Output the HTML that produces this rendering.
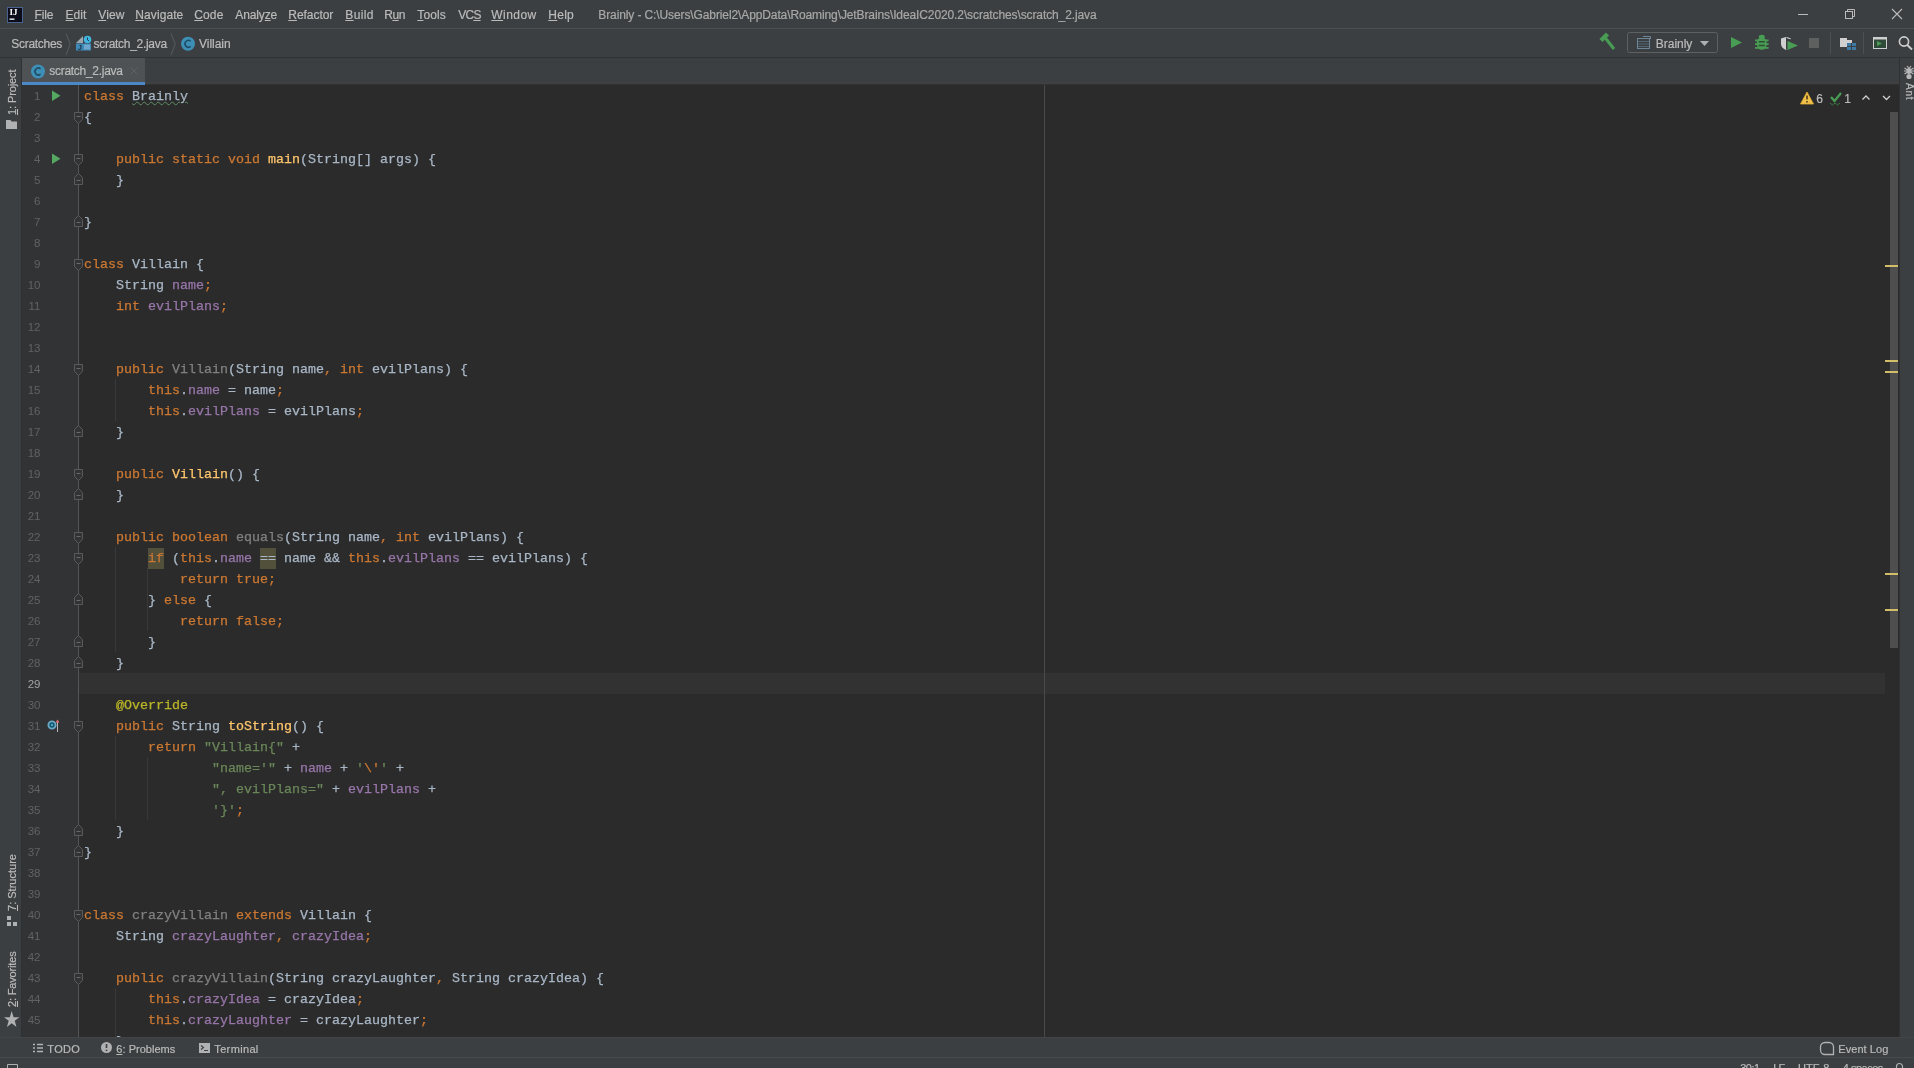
<!DOCTYPE html><html><head><meta charset="utf-8"><title>IntelliJ</title><style>
*{margin:0;padding:0;box-sizing:border-box}
html,body{width:1914px;height:1068px;overflow:hidden;background:#2B2B2B;font-family:"Liberation Sans",sans-serif;font-size:12px;color:#BBBBBB}
.a{position:absolute}
svg.a{overflow:visible}
.ui{position:absolute;white-space:nowrap;font-size:12px;line-height:14px;color:#BBBBBB;-webkit-text-stroke:0.2px currentColor}
.u{text-decoration:underline;text-underline-offset:1px;text-decoration-thickness:1px}
.cl{position:absolute;left:84px;height:21px;white-space:pre;font-family:"Liberation Mono",monospace;font-size:13.333px;line-height:21px;color:#A9B7C6;-webkit-text-stroke:0.25px currentColor}
.ln{position:absolute;left:0;width:40.5px;text-align:right;font-family:"Liberation Sans",sans-serif;font-size:11.5px;line-height:21px;color:#606366;white-space:pre}
.warn{background:#52503A;display:inline-block;height:21px;vertical-align:top}
.typo{text-decoration:underline wavy #5F8F68;text-decoration-thickness:1px;text-underline-offset:1px}
.vt{position:absolute;white-space:nowrap;font-size:11px;line-height:13px;color:#BBBBBB;transform-origin:0 0;-webkit-text-stroke:0.2px currentColor}
.ig{position:absolute;width:1px;background:#393939}
</style></head><body><div class="a" style="left:0;top:0;width:1914px;height:1068px;will-change:transform">
<div class="a" style="left:0;top:0;width:1914px;height:28px;background:#3C3F41"></div>
<div class="a" style="left:0;top:28px;width:1914px;height:1px;background:#4B4F52"></div>
<svg class="a" style="left:0;top:0" width="30" height="28"><rect x="7.5" y="7.5" width="15" height="15" fill="#0B0D1A" stroke="#48648E" stroke-width="1"/><text x="9.6" y="15.2" font-family="Liberation Serif" font-weight="bold" font-size="9" fill="#FFFFFF">IJ</text><rect x="9.5" y="18.5" width="5" height="1.3" fill="#FFFFFF"/></svg>
<div class="ui" style="left:34.6px;top:8px;font-size:12px;line-height:14px;letter-spacing:-0.21px"><span class="u">F</span>ile</div>
<div class="ui" style="left:65.6px;top:8px;font-size:12px;line-height:14px;letter-spacing:0.01px"><span class="u">E</span>dit</div>
<div class="ui" style="left:98.3px;top:8px;font-size:12px;line-height:14px;letter-spacing:0.07px"><span class="u">V</span>iew</div>
<div class="ui" style="left:135.3px;top:8px;font-size:12px;line-height:14px;letter-spacing:0.09px"><span class="u">N</span>avigate</div>
<div class="ui" style="left:194.3px;top:8px;font-size:12px;line-height:14px;letter-spacing:0.10px"><span class="u">C</span>ode</div>
<div class="ui" style="left:235.3px;top:8px;font-size:12px;line-height:14px;letter-spacing:-0.12px">Analy<span class="u">z</span>e</div>
<div class="ui" style="left:288.3px;top:8px;font-size:12px;line-height:14px;letter-spacing:-0.05px"><span class="u">R</span>efactor</div>
<div class="ui" style="left:345.3px;top:8px;font-size:12px;line-height:14px;letter-spacing:0.33px"><span class="u">B</span>uild</div>
<div class="ui" style="left:384.3px;top:8px;font-size:12px;line-height:14px;letter-spacing:-0.51px">R<span class="u">u</span>n</div>
<div class="ui" style="left:417.3px;top:8px;font-size:12px;line-height:14px;letter-spacing:0.12px"><span class="u">T</span>ools</div>
<div class="ui" style="left:458.3px;top:8px;font-size:12px;line-height:14px;letter-spacing:-0.80px">VC<span class="u">S</span></div>
<div class="ui" style="left:491.3px;top:8px;font-size:12px;line-height:14px;letter-spacing:0.46px"><span class="u">W</span>indow</div>
<div class="ui" style="left:548.3px;top:8px;font-size:12px;line-height:14px;letter-spacing:0.27px"><span class="u">H</span>elp</div>
<div class="ui" style="left:598.3px;top:8px;font-size:12px;line-height:14px;letter-spacing:-0.11px;color:#A8A8A8">Brainly - C:\Users\Gabriel2\AppData\Roaming\JetBrains\IdeaIC2020.2\scratches\scratch_2.java</div>
<svg class="a" style="left:1780px;top:0" width="134" height="28"><path d="M18 14.5H28" stroke="#BBBBBB" stroke-width="1"/><rect x="65.5" y="11.5" width="7" height="7" fill="none" stroke="#BBBBBB"/><path d="M67.5 11.5V9.5H74.5V16.5H72.5" fill="none" stroke="#BBBBBB"/><path d="M112 9L122 19M122 9L112 19" stroke="#BBBBBB" stroke-width="1.1"/></svg>
<div class="a" style="left:0;top:29px;width:1914px;height:28px;background:#3C3F41"></div>
<div class="a" style="left:0;top:57px;width:1914px;height:1px;background:#2F3133"></div>
<div class="ui" style="left:11.3px;top:37px;font-size:12px;line-height:14px;letter-spacing:-0.29px">Scratches</div>
<svg class="a" style="left:0;top:29px" width="240" height="28"><path d="M66 4.5L70.2 15L66 26" stroke="#55585A" stroke-width="1.1" fill="none"/><path d="M171 4.5L175.2 15L171 26" stroke="#55585A" stroke-width="1.1" fill="none"/><path d="M76 14H83V7Z" fill="#9AA7B0"/><circle cx="87.5" cy="10.5" r="3.8" fill="#40B6E0"/><path d="M87.5 8.5V10.8L89 12" stroke="#1D3A4A" stroke-width="1" fill="none"/><rect x="76" y="14.5" width="15" height="7" fill="#3F8AB8"/><rect x="84" y="15.5" width="6" height="5" fill="#6FA8CC"/><text x="78" y="21" font-family="Liberation Sans" font-weight="bold" font-size="7" fill="#1B2B3B">J</text><circle cx="188" cy="14.8" r="7" fill="#3E8FB6"/><path d="M190.6 12.2A3.4 3.4 0 1 0 190.6 17.4" stroke="#1E4E67" stroke-width="1.6" fill="none"/></svg>
<div class="ui" style="left:93.6px;top:37px;font-size:12px;line-height:14px;letter-spacing:-0.30px">scratch_2.java</div>
<div class="ui" style="left:199.0px;top:37px;font-size:12px;line-height:14px;letter-spacing:-0.03px">Villain</div>
<svg class="a" style="left:1590px;top:29px" width="324" height="28"><path d="M11 11.5L17.5 5" stroke="#499C54" stroke-width="4.5"/><path d="M15 8.5L24 20" stroke="#499C54" stroke-width="3"/><rect x="37.5" y="3.5" width="90" height="20" rx="2" fill="none" stroke="#5E6162"/><rect x="47.5" y="9.5" width="12" height="10" fill="none" stroke="#6E8595"/><path d="M48 12.5H59M48 15H59M48 17.5H59" stroke="#56707F" stroke-width="0.8"/><path d="M53 7.5H60.5V10" stroke="#6E8595" fill="none"/><path d="M110 12H119L114.5 17Z" fill="#AFB1B3"/><path d="M141 8L152 13.5L141 19Z" fill="#499C54"/><g fill="#499C54"><ellipse cx="171.8" cy="7.8" rx="3" ry="2"/><ellipse cx="171.8" cy="14.5" rx="5" ry="6.3"/><rect x="165" y="10.5" width="13.6" height="1.8"/><rect x="165" y="14.2" width="13.6" height="1.8"/><rect x="165" y="18" width="13.6" height="1.8"/></g><path d="M168.8 12.8H174.8M168.8 16.5H174.8" stroke="#2C4F31" stroke-width="1.4"/><path d="M191 9.5L196 8L201 9.5V15C201 18 198.5 20 196 21C193.5 20 191 18 191 15Z" fill="#CFCFCF"/><path d="M196 8V21C198.5 20 201 18 201 15V9.5Z" fill="#3C3F41"/><path d="M196.5 8.5L200.5 9.8" stroke="#CFCFCF"/><path d="M197.5 12L208 16.5L197.5 21Z" fill="#499C54"/><rect x="219" y="9" width="10" height="10" fill="#5E6060"/><path d="M240.5 3V25M273.5 3V25" stroke="#4D5052"/><rect x="250" y="9" width="7" height="9" fill="#CFCFCF"/><rect x="256" y="11" width="6" height="3" fill="#CFCFCF"/><rect x="257" y="14" width="9" height="7" fill="#3D7BA6"/><path d="M261.5 14V21M257 17.5H266" stroke="#3C3F41" stroke-width="1"/><rect x="283.5" y="8.5" width="13" height="11" fill="#2F4A38" stroke="#CFCFCF" stroke-width="1"/><rect x="283.5" y="8.5" width="13" height="2" fill="#CFCFCF"/><path d="M287 12L292 14.5L287 17Z" fill="#499C54"/><circle cx="314" cy="12.5" r="4.6" fill="none" stroke="#CFCFCF" stroke-width="1.6"/><path d="M317.3 16L322 20.5" stroke="#CFCFCF" stroke-width="1.8"/></svg>
<div class="ui" style="left:1655.8px;top:37px;font-size:12px;line-height:14px;letter-spacing:-0.03px">Brainly</div>
<div class="a" style="left:0;top:58px;width:21px;height:979px;background:#3C3F41"></div>
<div class="a" style="left:21px;top:58px;width:1px;height:979px;background:#2F3133"></div>
<div class="vt" style="left:6px;top:115.0px;letter-spacing:-0.11px;color:#BBBBBB;transform:rotate(-90deg)"><span class="u">1</span>: Project</div>
<div class="vt" style="left:6px;top:910.7px;letter-spacing:0.01px;color:#BBBBBB;transform:rotate(-90deg)"><span class="u">7</span>: Structure</div>
<div class="vt" style="left:6px;top:1007.4px;letter-spacing:-0.16px;color:#BBBBBB;transform:rotate(-90deg)"><span class="u">2</span>: Favorites</div>
<svg class="a" style="left:0;top:0" width="21" height="1068"><path d="M6 120H10.5L11.5 121.5H17V129H6Z" fill="#AFB1B3"/><rect x="7" y="916" width="4" height="4" fill="#AFB1B3"/><rect x="7" y="922" width="4" height="4" fill="#AFB1B3"/><rect x="13" y="922" width="4" height="4" fill="#AFB1B3"/><path d="M11.7 1011L13.6 1017.2H19.4L14.7 1020.8L16.5 1027L11.7 1023.2L6.9 1027L8.7 1020.8L4 1017.2H9.8Z" fill="#AFB1B3"/></svg>
<div class="a" style="left:22px;top:58px;width:1877px;height:26px;background:#3C3F41"></div>
<div class="a" style="left:22px;top:84px;width:1877px;height:1px;background:#323232"></div>
<div class="a" style="left:145px;top:62px;width:1754px;height:1px;background:#393B3D"></div>
<div class="a" style="left:145px;top:82px;width:1754px;height:2px;background:#3F4042"></div>
<div class="a" style="left:22px;top:58px;width:123px;height:24px;background:#4E5254"></div>
<div class="a" style="left:22px;top:82px;width:123px;height:3px;background:#4A88C7"></div>
<svg class="a" style="left:22px;top:58px" width="123" height="26"><circle cx="16" cy="13.5" r="7" fill="#3E8FB6"/><path d="M18.6 10.9A3.4 3.4 0 1 0 18.6 16.1" stroke="#1E4E67" stroke-width="1.6" fill="none"/><path d="M108.5 9.5L115.5 16.5M115.5 9.5L108.5 16.5" stroke="#5F6265" stroke-width="1"/></svg>
<div class="ui" style="left:49.3px;top:64px;font-size:12px;line-height:14px;letter-spacing:-0.29px">scratch_2.java</div>
<div class="a" style="left:22px;top:85px;width:56px;height:952px;background:#313335"></div>
<div class="a" style="left:78px;top:85px;width:1821px;height:952px;background:#2B2B2B"></div>
<div class="a" style="left:79px;top:673px;width:1806px;height:21px;background:#323232"></div>
<div class="a" style="left:1044px;top:85px;width:1px;height:952px;background:#4A4A4A"></div>
<div class="a" style="left:78px;top:85px;width:1px;height:952px;background:#555555"></div>
<div class="ig" style="left:115px;top:379px;height:42px"></div>
<div class="ig" style="left:115px;top:547px;height:105px"></div>
<div class="ig" style="left:147px;top:568px;height:63px"></div>
<div class="ig" style="left:115px;top:736px;height:84px"></div>
<div class="ig" style="left:147px;top:757px;height:63px"></div>
<div class="ig" style="left:115px;top:988px;height:63px"></div>
<div class="a" style="left:0;top:85px;width:1899px;height:952px;overflow:hidden"><div class="a" style="left:0;top:-85px;width:1899px;height:1068px">
<div class="ln" style="top:86px;color:#606366">1</div>
<div class="cl" style="top:86px"><span style="color:#CC7832">class </span><span style="color:#A9B7C6" class="typo">Brainly</span></div>
<div class="ln" style="top:107px;color:#606366">2</div>
<div class="cl" style="top:107px"><span style="color:#A9B7C6">{</span></div>
<div class="ln" style="top:128px;color:#606366">3</div>
<div class="ln" style="top:149px;color:#606366">4</div>
<div class="cl" style="top:149px"><span style="color:#A9B7C6">    </span><span style="color:#CC7832">public static void </span><span style="color:#FFC66D">main</span><span style="color:#A9B7C6">(String[] args) {</span></div>
<div class="ln" style="top:170px;color:#606366">5</div>
<div class="cl" style="top:170px"><span style="color:#A9B7C6">    }</span></div>
<div class="ln" style="top:191px;color:#606366">6</div>
<div class="ln" style="top:212px;color:#606366">7</div>
<div class="cl" style="top:212px"><span style="color:#A9B7C6">}</span></div>
<div class="ln" style="top:233px;color:#606366">8</div>
<div class="ln" style="top:254px;color:#606366">9</div>
<div class="cl" style="top:254px"><span style="color:#CC7832">class </span><span style="color:#A9B7C6">Villain {</span></div>
<div class="ln" style="top:275px;color:#606366">10</div>
<div class="cl" style="top:275px"><span style="color:#A9B7C6">    String </span><span style="color:#9876AA">name</span><span style="color:#CC7832">;</span></div>
<div class="ln" style="top:296px;color:#606366">11</div>
<div class="cl" style="top:296px"><span style="color:#A9B7C6">    </span><span style="color:#CC7832">int </span><span style="color:#9876AA">evilPlans</span><span style="color:#CC7832">;</span></div>
<div class="ln" style="top:317px;color:#606366">12</div>
<div class="ln" style="top:338px;color:#606366">13</div>
<div class="ln" style="top:359px;color:#606366">14</div>
<div class="cl" style="top:359px"><span style="color:#A9B7C6">    </span><span style="color:#CC7832">public </span><span style="color:#808080">Villain</span><span style="color:#A9B7C6">(String name</span><span style="color:#CC7832">, </span><span style="color:#CC7832">int </span><span style="color:#A9B7C6">evilPlans) {</span></div>
<div class="ln" style="top:380px;color:#606366">15</div>
<div class="cl" style="top:380px"><span style="color:#A9B7C6">        </span><span style="color:#CC7832">this</span><span style="color:#A9B7C6">.</span><span style="color:#9876AA">name</span><span style="color:#A9B7C6"> = name</span><span style="color:#CC7832">;</span></div>
<div class="ln" style="top:401px;color:#606366">16</div>
<div class="cl" style="top:401px"><span style="color:#A9B7C6">        </span><span style="color:#CC7832">this</span><span style="color:#A9B7C6">.</span><span style="color:#9876AA">evilPlans</span><span style="color:#A9B7C6"> = evilPlans</span><span style="color:#CC7832">;</span></div>
<div class="ln" style="top:422px;color:#606366">17</div>
<div class="cl" style="top:422px"><span style="color:#A9B7C6">    }</span></div>
<div class="ln" style="top:443px;color:#606366">18</div>
<div class="ln" style="top:464px;color:#606366">19</div>
<div class="cl" style="top:464px"><span style="color:#A9B7C6">    </span><span style="color:#CC7832">public </span><span style="color:#FFC66D">Villain</span><span style="color:#A9B7C6">() {</span></div>
<div class="ln" style="top:485px;color:#606366">20</div>
<div class="cl" style="top:485px"><span style="color:#A9B7C6">    }</span></div>
<div class="ln" style="top:506px;color:#606366">21</div>
<div class="ln" style="top:527px;color:#606366">22</div>
<div class="cl" style="top:527px"><span style="color:#A9B7C6">    </span><span style="color:#CC7832">public boolean </span><span style="color:#808080">equals</span><span style="color:#A9B7C6">(String name</span><span style="color:#CC7832">, </span><span style="color:#CC7832">int </span><span style="color:#A9B7C6">evilPlans) {</span></div>
<div class="ln" style="top:548px;color:#606366">23</div>
<div class="cl" style="top:548px"><span style="color:#A9B7C6">        </span><span style="color:#CC7832" class="warn">if</span><span style="color:#A9B7C6"> (</span><span style="color:#CC7832">this</span><span style="color:#A9B7C6">.</span><span style="color:#9876AA">name</span><span style="color:#A9B7C6"> </span><span style="color:#A9B7C6" class="warn">==</span><span style="color:#A9B7C6"> name &amp;&amp; </span><span style="color:#CC7832">this</span><span style="color:#A9B7C6">.</span><span style="color:#9876AA">evilPlans</span><span style="color:#A9B7C6"> == evilPlans) {</span></div>
<div class="ln" style="top:569px;color:#606366">24</div>
<div class="cl" style="top:569px"><span style="color:#A9B7C6">            </span><span style="color:#CC7832">return true;</span></div>
<div class="ln" style="top:590px;color:#606366">25</div>
<div class="cl" style="top:590px"><span style="color:#A9B7C6">        } </span><span style="color:#CC7832">else </span><span style="color:#A9B7C6">{</span></div>
<div class="ln" style="top:611px;color:#606366">26</div>
<div class="cl" style="top:611px"><span style="color:#A9B7C6">            </span><span style="color:#CC7832">return false;</span></div>
<div class="ln" style="top:632px;color:#606366">27</div>
<div class="cl" style="top:632px"><span style="color:#A9B7C6">        }</span></div>
<div class="ln" style="top:653px;color:#606366">28</div>
<div class="cl" style="top:653px"><span style="color:#A9B7C6">    }</span></div>
<div class="ln" style="top:674px;color:#A4A3A3">29</div>
<div class="ln" style="top:695px;color:#606366">30</div>
<div class="cl" style="top:695px"><span style="color:#A9B7C6">    </span><span style="color:#BBB529">@Override</span></div>
<div class="ln" style="top:716px;color:#606366">31</div>
<div class="cl" style="top:716px"><span style="color:#A9B7C6">    </span><span style="color:#CC7832">public </span><span style="color:#A9B7C6">String </span><span style="color:#FFC66D">toString</span><span style="color:#A9B7C6">() {</span></div>
<div class="ln" style="top:737px;color:#606366">32</div>
<div class="cl" style="top:737px"><span style="color:#A9B7C6">        </span><span style="color:#CC7832">return </span><span style="color:#6A8759">&quot;Villain{&quot;</span><span style="color:#A9B7C6"> +</span></div>
<div class="ln" style="top:758px;color:#606366">33</div>
<div class="cl" style="top:758px"><span style="color:#A9B7C6">                </span><span style="color:#6A8759">&quot;name=&#x27;&quot;</span><span style="color:#A9B7C6"> + </span><span style="color:#9876AA">name</span><span style="color:#A9B7C6"> + </span><span style="color:#6A8759">&#x27;</span><span style="color:#CC7832">\&#x27;</span><span style="color:#6A8759">&#x27;</span><span style="color:#A9B7C6"> +</span></div>
<div class="ln" style="top:779px;color:#606366">34</div>
<div class="cl" style="top:779px"><span style="color:#A9B7C6">                </span><span style="color:#6A8759">&quot;, evilPlans=&quot;</span><span style="color:#A9B7C6"> + </span><span style="color:#9876AA">evilPlans</span><span style="color:#A9B7C6"> +</span></div>
<div class="ln" style="top:800px;color:#606366">35</div>
<div class="cl" style="top:800px"><span style="color:#A9B7C6">                </span><span style="color:#6A8759">&#x27;}&#x27;</span><span style="color:#CC7832">;</span></div>
<div class="ln" style="top:821px;color:#606366">36</div>
<div class="cl" style="top:821px"><span style="color:#A9B7C6">    }</span></div>
<div class="ln" style="top:842px;color:#606366">37</div>
<div class="cl" style="top:842px"><span style="color:#A9B7C6">}</span></div>
<div class="ln" style="top:863px;color:#606366">38</div>
<div class="ln" style="top:884px;color:#606366">39</div>
<div class="ln" style="top:905px;color:#606366">40</div>
<div class="cl" style="top:905px"><span style="color:#CC7832">class </span><span style="color:#808080">crazyVillain </span><span style="color:#CC7832">extends </span><span style="color:#A9B7C6">Villain {</span></div>
<div class="ln" style="top:926px;color:#606366">41</div>
<div class="cl" style="top:926px"><span style="color:#A9B7C6">    String </span><span style="color:#9876AA">crazyLaughter</span><span style="color:#CC7832">, </span><span style="color:#9876AA">crazyIdea</span><span style="color:#CC7832">;</span></div>
<div class="ln" style="top:947px;color:#606366">42</div>
<div class="ln" style="top:968px;color:#606366">43</div>
<div class="cl" style="top:968px"><span style="color:#A9B7C6">    </span><span style="color:#CC7832">public </span><span style="color:#808080">crazyVillain</span><span style="color:#A9B7C6">(String crazyLaughter</span><span style="color:#CC7832">, </span><span style="color:#A9B7C6">String crazyIdea) {</span></div>
<div class="ln" style="top:989px;color:#606366">44</div>
<div class="cl" style="top:989px"><span style="color:#A9B7C6">        </span><span style="color:#CC7832">this</span><span style="color:#A9B7C6">.</span><span style="color:#9876AA">crazyIdea</span><span style="color:#A9B7C6"> = crazyIdea</span><span style="color:#CC7832">;</span></div>
<div class="ln" style="top:1010px;color:#606366">45</div>
<div class="cl" style="top:1010px"><span style="color:#A9B7C6">        </span><span style="color:#CC7832">this</span><span style="color:#A9B7C6">.</span><span style="color:#9876AA">crazyLaughter</span><span style="color:#A9B7C6"> = crazyLaughter</span><span style="color:#CC7832">;</span></div>
<div class="cl" style="top:1031px"><span style="color:#A9B7C6">    }</span></div>
</div></div>
<svg class="a" style="left:0;top:0" width="90" height="1068"><path d="M52 90.5L60.5 95.8L52 101Z" fill="#55A862"/><path d="M52 153.5L60.5 158.8L52 164Z" fill="#55A862"/><path d="M74.5 112.5H82.5V119.5L78.5 123.5L74.5 119.5Z" fill="#313335" stroke="#5A5A5A"/><path d="M76.5 116.5H80.5" stroke="#6A6A6A"/><path d="M74.5 154.5H82.5V161.5L78.5 165.5L74.5 161.5Z" fill="#313335" stroke="#5A5A5A"/><path d="M76.5 158.5H80.5" stroke="#6A6A6A"/><path d="M74.5 259.5H82.5V266.5L78.5 270.5L74.5 266.5Z" fill="#313335" stroke="#5A5A5A"/><path d="M76.5 263.5H80.5" stroke="#6A6A6A"/><path d="M74.5 364.5H82.5V371.5L78.5 375.5L74.5 371.5Z" fill="#313335" stroke="#5A5A5A"/><path d="M76.5 368.5H80.5" stroke="#6A6A6A"/><path d="M74.5 469.5H82.5V476.5L78.5 480.5L74.5 476.5Z" fill="#313335" stroke="#5A5A5A"/><path d="M76.5 473.5H80.5" stroke="#6A6A6A"/><path d="M74.5 532.5H82.5V539.5L78.5 543.5L74.5 539.5Z" fill="#313335" stroke="#5A5A5A"/><path d="M76.5 536.5H80.5" stroke="#6A6A6A"/><path d="M74.5 553.5H82.5V560.5L78.5 564.5L74.5 560.5Z" fill="#313335" stroke="#5A5A5A"/><path d="M76.5 557.5H80.5" stroke="#6A6A6A"/><path d="M74.5 721.5H82.5V728.5L78.5 732.5L74.5 728.5Z" fill="#313335" stroke="#5A5A5A"/><path d="M76.5 725.5H80.5" stroke="#6A6A6A"/><path d="M74.5 910.5H82.5V917.5L78.5 921.5L74.5 917.5Z" fill="#313335" stroke="#5A5A5A"/><path d="M76.5 914.5H80.5" stroke="#6A6A6A"/><path d="M74.5 973.5H82.5V980.5L78.5 984.5L74.5 980.5Z" fill="#313335" stroke="#5A5A5A"/><path d="M76.5 977.5H80.5" stroke="#6A6A6A"/><path d="M74.5 184.5H82.5V177.5L78.5 173.5L74.5 177.5Z" fill="#313335" stroke="#5A5A5A"/><path d="M76.5 180.5H80.5" stroke="#6A6A6A"/><path d="M74.5 226.5H82.5V219.5L78.5 215.5L74.5 219.5Z" fill="#313335" stroke="#5A5A5A"/><path d="M76.5 222.5H80.5" stroke="#6A6A6A"/><path d="M74.5 436.5H82.5V429.5L78.5 425.5L74.5 429.5Z" fill="#313335" stroke="#5A5A5A"/><path d="M76.5 432.5H80.5" stroke="#6A6A6A"/><path d="M74.5 499.5H82.5V492.5L78.5 488.5L74.5 492.5Z" fill="#313335" stroke="#5A5A5A"/><path d="M76.5 495.5H80.5" stroke="#6A6A6A"/><path d="M74.5 604.5H82.5V597.5L78.5 593.5L74.5 597.5Z" fill="#313335" stroke="#5A5A5A"/><path d="M76.5 600.5H80.5" stroke="#6A6A6A"/><path d="M74.5 646.5H82.5V639.5L78.5 635.5L74.5 639.5Z" fill="#313335" stroke="#5A5A5A"/><path d="M76.5 642.5H80.5" stroke="#6A6A6A"/><path d="M74.5 667.5H82.5V660.5L78.5 656.5L74.5 660.5Z" fill="#313335" stroke="#5A5A5A"/><path d="M76.5 663.5H80.5" stroke="#6A6A6A"/><path d="M74.5 835.5H82.5V828.5L78.5 824.5L74.5 828.5Z" fill="#313335" stroke="#5A5A5A"/><path d="M76.5 831.5H80.5" stroke="#6A6A6A"/><path d="M74.5 856.5H82.5V849.5L78.5 845.5L74.5 849.5Z" fill="#313335" stroke="#5A5A5A"/><path d="M76.5 852.5H80.5" stroke="#6A6A6A"/><circle cx="52" cy="725" r="3.6" fill="#10586F" stroke="#6AA8C4" stroke-width="1.9"/><circle cx="52" cy="725" r="1.2" fill="#4F9FBF"/><path d="M57.5 732V721" stroke="#B8B8B8" stroke-width="1"/><path d="M55.5 722.5L57.5 719.5L59.5 722.5Z" fill="#E07070"/></svg>
<svg class="a" style="left:1790px;top:85px" width="110" height="30"><path d="M17 7L23.5 19H10.5Z" fill="#F0C04A" stroke="#E2AD33" stroke-width="0.8" stroke-linejoin="round"/><path d="M17 10.5V14.5M17 16V17.5" stroke="#3A2A10" stroke-width="1.4"/><path d="M41 12L44.5 16L51 8" stroke="#499C54" stroke-width="2.2" fill="none"/><path d="M40 18L42.5 20L45 18L47.5 20L50 18" stroke="#3F7F48" stroke-width="0.9" fill="none"/><path d="M72.5 14.5L76 11L79.5 14.5" stroke="#CFCFCF" stroke-width="1.3" fill="none"/><path d="M93 11L96.5 14.5L100 11" stroke="#CFCFCF" stroke-width="1.3" fill="none"/></svg>
<div class="ui" style="left:1816.3px;top:92px;font-size:12px;line-height:14px;letter-spacing:-0.17px;color:#BBBBBB">6</div>
<div class="ui" style="left:1844.3px;top:92px;font-size:12px;line-height:14px;letter-spacing:-0.67px;color:#BBBBBB">1</div>
<div class="a" style="left:1890px;top:112px;width:8px;height:536px;background:#4E4E4E"></div>
<div class="a" style="left:1885px;top:265px;width:13px;height:2px;background:#D2BD68"></div>
<div class="a" style="left:1885px;top:360px;width:13px;height:2px;background:#D2BD68"></div>
<div class="a" style="left:1885px;top:371px;width:13px;height:2px;background:#D2BD68"></div>
<div class="a" style="left:1885px;top:573px;width:13px;height:2px;background:#D2BD68"></div>
<div class="a" style="left:1885px;top:609px;width:13px;height:2px;background:#D2BD68"></div>
<div class="a" style="left:1899px;top:58px;width:1px;height:979px;background:#2F3133"></div>
<div class="a" style="left:1900px;top:58px;width:14px;height:979px;background:#3C3F41"></div>
<svg class="a" style="left:1900px;top:60px" width="14" height="22"><path d="M4.5 8L13.5 14M13.5 8L4.5 14M4 11H14M7 6L9 8.5M11 6L9 8.5" stroke="#B5B7B9" stroke-width="1.2"/><ellipse cx="9" cy="11" rx="2.4" ry="3" fill="#B5B7B9"/><circle cx="9" cy="16.5" r="2.6" fill="#B5B7B9"/></svg>
<div class="vt" style="font-size:10px;line-height:12px;left:1914.5px;top:83.1px;letter-spacing:0.80px;color:#BBBBBB;transform:rotate(90deg)">Ant</div>
<div class="a" style="left:0;top:1037px;width:1914px;height:1px;background:#424446"></div>
<div class="a" style="left:0;top:1038px;width:1914px;height:19px;background:#3C3F41"></div>
<div class="a" style="left:0;top:1057px;width:1914px;height:1px;background:#47494B"></div>
<div class="a" style="left:0;top:1058px;width:1914px;height:10px;background:#3C3F41"></div>
<svg class="a" style="left:0;top:1036px" width="260" height="32"><path d="M33 8.5H35M33 12H35M33 15.5H35" stroke="#AFB1B3" stroke-width="1.6"/><path d="M37 8.5H43M37 12H43M37 15.5H43" stroke="#AFB1B3" stroke-width="1.6"/><circle cx="106.5" cy="11.5" r="5.5" fill="#AFB1B3"/><path d="M106.5 8V12" stroke="#3C3F41" stroke-width="1.6"/><circle cx="106.5" cy="14.3" r="0.9" fill="#3C3F41"/><rect x="199" y="7" width="11" height="10" fill="#AFB1B3"/><path d="M201 9.5L203.5 11.5L201 13.5M204 14.5H208" stroke="#3C3F41" stroke-width="1.1" fill="none"/><path d="M7.5 32V28.5H17.5V32" stroke="#AFB1B3" fill="none"/></svg>
<div class="ui" style="left:47.3px;top:1043px;font-size:11px;line-height:13px;letter-spacing:0.31px">TODO</div>
<div class="ui" style="left:116.3px;top:1043px;font-size:11px;line-height:13px;letter-spacing:0.03px"><span class="u">6</span>: Problems</div>
<div class="ui" style="left:214.3px;top:1043px;font-size:11px;line-height:13px;letter-spacing:0.35px">Terminal</div>
<svg class="a" style="left:1815px;top:1036px" width="30" height="24"><path d="M13 18.5H10A4.5 4.5 0 0 1 5.5 14V11A4.5 4.5 0 0 1 10 6.5H14A4.5 4.5 0 0 1 18.5 11V18.5Z" fill="none" stroke="#AFB1B3" stroke-width="1.3"/></svg>
<div class="ui" style="left:1838.3px;top:1043px;font-size:11px;line-height:13px;letter-spacing:0.06px">Event Log</div>
<div class="ui" style="left:1740.3px;top:1062px;font-size:11px;line-height:13px;letter-spacing:-0.54px">30:1</div>
<div class="ui" style="left:1773.3px;top:1062px;font-size:11px;line-height:13px;letter-spacing:-0.80px">LF</div>
<div class="ui" style="left:1798.1px;top:1062px;font-size:11px;line-height:13px;letter-spacing:0.01px">UTF-8</div>
<div class="ui" style="left:1842.8px;top:1062px;font-size:11px;line-height:13px;letter-spacing:-0.50px">4 spaces</div>
<svg class="a" style="left:1890px;top:1058px" width="20" height="10"><path d="M6.5 11V8.5A3 3 0 0 1 12.5 8.5V11" stroke="#AFB1B3" stroke-width="1.2" fill="none"/></svg>
</div></body></html>
